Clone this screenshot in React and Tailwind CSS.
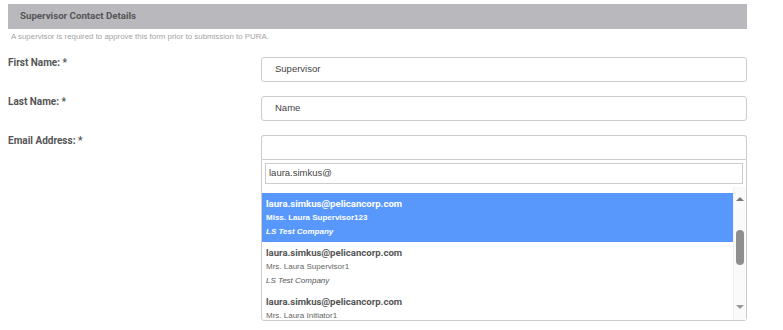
import React from "react";

const OPTIONS = [
  { email: "laura.simkus@pelicancorp.com", name: "Miss. Laura Supervisor123", company: "LS Test Company", active: true },
  { email: "laura.simkus@pelicancorp.com", name: "Mrs. Laura Supervisor1", company: "LS Test Company" },
  { email: "laura.simkus@pelicancorp.com", name: "Mrs. Laura Initiator1", company: "LS Test Company" },
];

function Label({ children }) {
  return (
    <div className="w-[253px] shrink-0 text-[10px] leading-[12px] font-bold text-[#555] font-['Roboto',sans-serif]">
      {children}
    </div>
  );
}

function Option({ o }) {
  const on = o.active;
  return (
    <div className={`pl-[4px] pt-[4px] pb-[3px] ${on ? "bg-[#5897fb] text-white" : "text-[#555]"}`}>
      <div className="h-[14px] leading-[14px] text-[9.6px] font-bold font-['Roboto',sans-serif]">{o.email}</div>
      <div className={`h-[14px] leading-[14px] text-[8px] font-['Liberation_Sans',sans-serif] ${on ? "font-bold" : "text-[#666]"}`}>{o.name}</div>
      <div className={`h-[14px] leading-[14px] text-[8px] italic font-['Liberation_Sans',sans-serif] ${on ? "font-bold" : ""}`}>{o.company}</div>
    </div>
  );
}

export default function App() {
  return (
    <div className="w-[783px] h-[330px] bg-white pt-[4px] pl-[8px] overflow-hidden">
      <div className="w-[739px]">
        <div className="h-[25px] bg-[#b9b8bd] flex items-center pl-[12px] text-[9.7px] font-bold text-[#555] font-['Roboto',sans-serif]">
          Supervisor Contact Details
        </div>
        <p className="mt-[3px] pl-[3px] text-[7.9px] leading-[10px] text-[#a3a3a3] font-['Liberation_Sans',sans-serif]">
          A supervisor is required to approve this form prior to submission to PURA.
        </p>

        <div className="mt-[15px] flex">
          <Label>First Name: *</Label>
          <div className="flex-1 h-[25px] border border-[#ccc] rounded-[3px] flex items-center pl-[13px] text-[9.5px] text-[#444] font-['Liberation_Sans',sans-serif]">
            Supervisor
          </div>
        </div>

        <div className="mt-[14px] flex">
          <Label>Last Name: *</Label>
          <div className="flex-1 h-[25px] border border-[#ccc] rounded-[3px] flex items-center pl-[13px] text-[9.5px] text-[#444] font-['Liberation_Sans',sans-serif]">
            Name
          </div>
        </div>

        <div className="mt-[14px] flex">
          <Label>Email Address: *</Label>
          <div className="flex-1">
            <div className="h-[24px] border border-[#ccc] border-b-0 rounded-t-[3px]" />
            <div className="border border-[#ccc] rounded-b-[3px]">
              <div className="p-[3px]">
                <div className="h-[21px] border border-[#ccc] flex items-center pl-[3px] text-[9.5px] text-[#444] font-['Liberation_Sans',sans-serif]">
                  laura.simkus@
                </div>
              </div>
              <div className="h-[133px] flex overflow-hidden">
                <div className="flex-1 overflow-hidden">
                  <div className="mt-[-12px] pl-[4px] h-[14px] leading-[14px] text-[8px] italic text-[#555] font-['Liberation_Sans',sans-serif]">
                    LS Test Company
                  </div>
                  <div className="mt-[4px]">
                    {OPTIONS.map((o, i) => (
                      <Option key={i} o={o} />
                    ))}
                  </div>
                </div>
                <div className="w-[13px] bg-[#fafafa] border-l border-[#f0f0f0] flex flex-col items-center">
                  <div className="mt-[10px] w-0 h-0 border-l-[4px] border-r-[4px] border-b-[4px] border-l-transparent border-r-transparent border-b-[#777]" />
                  <div className="mt-[29px] w-[8px] h-[35px] rounded-full bg-[#8f8f8f]" />
                  <div className="mt-[40px] w-0 h-0 border-l-[4px] border-r-[4px] border-t-[4px] border-l-transparent border-r-transparent border-t-[#999]" />
                </div>
              </div>
            </div>
          </div>
        </div>
      </div>
    </div>
  );
}
